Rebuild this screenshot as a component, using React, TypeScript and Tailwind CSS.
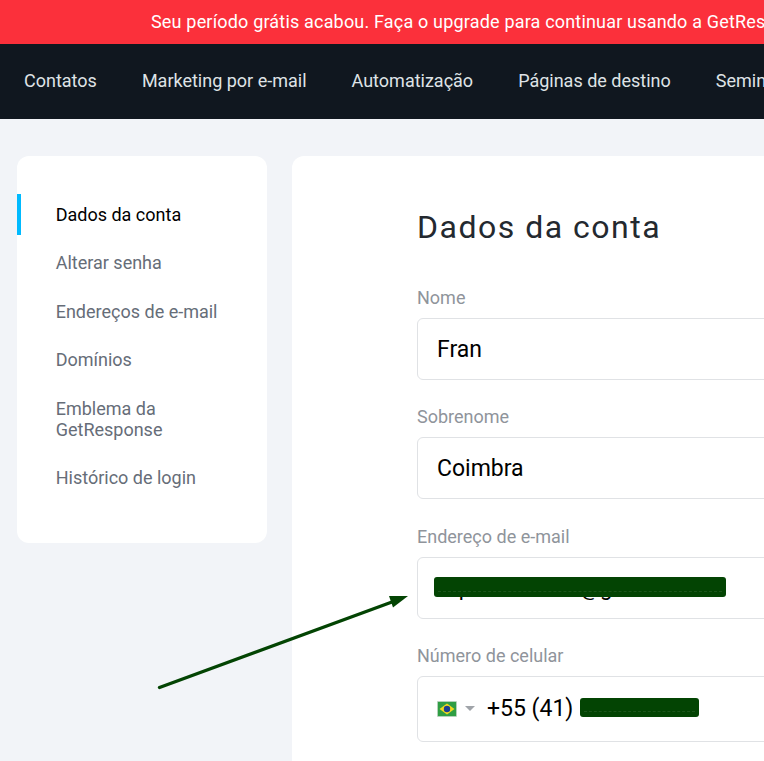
const navItems = ["Contatos", "Marketing por e-mail", "Automatização", "Páginas de destino", "Seminários"];

const sideItems = ["Alterar senha", "Endereços de e-mail", "Domínios", "Emblema da GetResponse", "Histórico de login"];

function BrazilFlag() {
  return (
    <svg width="20" height="16" viewBox="0 0 20 16" className="shrink-0">
      <rect x="0.5" y="0.5" width="19" height="15" fill="#2f9e44" stroke="#c9d6cc" strokeWidth="0.6" />
      <path d="M10 2.5 L17.5 8 L10 13.5 L2.5 8 Z" fill="#f2d91e" />
      <circle cx="10" cy="8" r="3.2" fill="#1d3f8f" />
    </svg>
  );
}

function Arrow() {
  return (
    <svg className="absolute left-0 top-0 pointer-events-none" width="764" height="761" viewBox="0 0 764 761">
      <line x1="159.5" y1="687.5" x2="392" y2="602" stroke="#034403" strokeWidth="3.4" strokeLinecap="round" />
      <path d="M408 596 L389 596 L393 607.5 Z" fill="#034403" />
    </svg>
  );
}

// scribble over private data, a faint dashed line of the text still shows through
function Redaction({ className }: { className: string }) {
  return (
    <div className={`absolute rounded-[3px] bg-[#034403] flex items-end pb-[5px] px-[4px] ${className}`}>
      <div className="w-full border-b border-dashed border-[#1c551c]" />
    </div>
  );
}

function Field({ label, value }: { label: string; value: string }) {
  return (
    <div className="mb-[26.3px]">
      <div className="text-[18px] leading-[21px] text-[#8f949b] mb-[10px]">{label}</div>
      <div className="h-[62px] rounded-[6px] border border-[#e0e2e5] flex items-center pl-[19px] pt-[2px] text-[23px] text-black bg-white">
        {value}
      </div>
    </div>
  );
}

export default function App() {
  return (
    <div className="relative w-[764px] h-[761px] overflow-hidden bg-[#f2f4f8] font-['Roboto',sans-serif]">
      {/* Trial banner */}
      <div className="h-[44px] bg-[#fb303b] flex items-center pl-[151px] pb-[1px] text-[18px] tracking-[0.18px] text-white whitespace-nowrap">
        Seu período grátis acabou. Faça o upgrade para continuar usando a GetResponse.
      </div>

      {/* Main nav */}
      <div className="h-[75px] bg-[#10171f] flex items-center gap-[45px] pl-[24px] pb-[2px] text-[18px] text-[#dfe3e6] whitespace-nowrap">
        {navItems.map((item) => (
          <span key={item}>{item}</span>
        ))}
      </div>

      <div className="flex gap-[25px] pl-[17px] pt-[37px]">
        {/* Sidebar */}
        <div className="relative w-[250px] h-[387px] shrink-0 rounded-[12px] bg-white pt-[35px] pl-[38.7px] pr-[30px]">
          <div className="absolute left-0 top-[38px] w-[4px] h-[41px] bg-[#00baff]" />
          <div className="py-[13.9px] text-[18px] leading-[20.7px] text-black">Dados da conta</div>
          {sideItems.map((item) => (
            <div key={item} className="py-[13.9px] text-[18px] leading-[20.7px] text-[#666d78]">
              {item}
            </div>
          ))}
        </div>

        {/* Account form */}
        <div className="w-[700px] h-[700px] shrink-0 rounded-[12px] bg-white pl-[125px] pr-[40px] pt-[52px]">
          <h1 className="text-[32px] leading-[38px] tracking-[1.5px] text-[#24292f] mb-[41px]">Dados da conta</h1>
          <Field label="Nome" value="Fran" />
          <Field label="Sobrenome" value="Coimbra" />

          <div className="mb-[26.3px]">
            <div className="text-[18px] leading-[21px] text-[#8f949b] mb-[10px]">Endereço de e-mail</div>
            <div className="relative h-[62px] rounded-[6px] border border-[#e0e2e5] flex items-center pl-[19px] text-[22px] text-black">
              <span>xxpxxxxxxxxxx@gmail.com</span>
              <Redaction className="left-[16px] top-[19px] w-[292px] h-[20px]" />
            </div>
          </div>

          <div>
            <div className="text-[18px] leading-[21px] text-[#8f949b] mb-[10px]">Número de celular</div>
            <div className="relative h-[66px] rounded-[6px] border border-[#e0e2e5] flex items-center pl-[19px] text-[23px] text-black">
              <BrazilFlag />
              <div className="ml-[8px] mr-[12px] w-0 h-0 border-x-[5px] border-x-transparent border-t-[5px] border-t-[#a0a4a9]" />
              <span>+55 (41)</span>
              <Redaction className="left-[162px] top-[21px] w-[119px] h-[19px]" />
            </div>
          </div>
        </div>
      </div>

      <Arrow />
    </div>
  );
}
